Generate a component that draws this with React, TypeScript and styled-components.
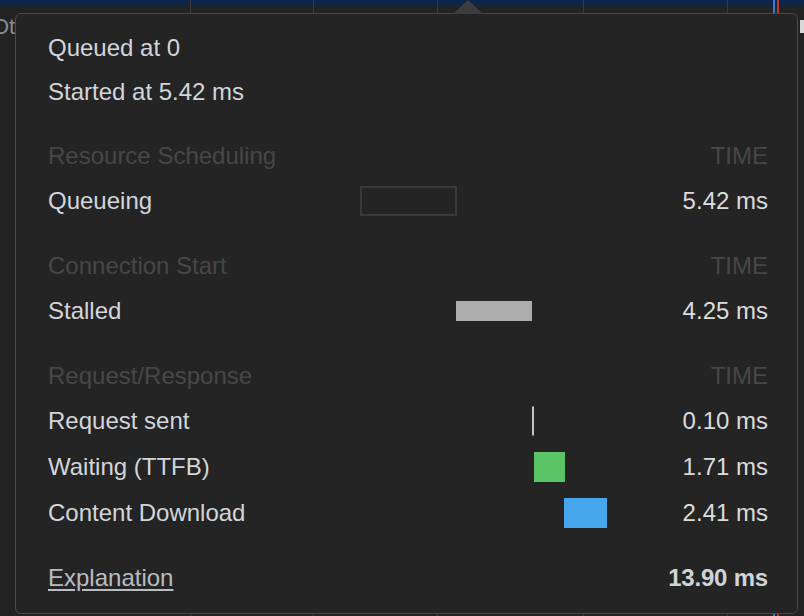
import React from "react";
import styled, { createGlobalStyle } from "styled-components";

const Global = createGlobalStyle`
  html, body { margin: 0; padding: 0; background: #232323; }
  body { width: 804px; height: 616px; overflow: hidden; font-family: "Liberation Sans", Arial, sans-serif; }
`;

const Canvas = styled.div`
  position: relative;
  width: 804px;
  height: 616px;
  overflow: hidden;
  background: #232323;
`;

const TopStrip = styled.div`
  height: 6px;
  background: #0c254c;
`;

const GridLine = styled.div<{ $color?: string; $w?: number }>`
  position: absolute;
  top: 0;
  bottom: 0;
  width: ${(p) => p.$w ?? 1}px;
  background: ${(p) => p.$color ?? "#3a3a3a"};
`;

const ClippedLabel = styled.div`
  position: absolute;
  left: -8px;
  top: 14px;
  font-size: 22px;
  line-height: 26px;
  color: #8c8c8c;
`;

const ScrollThumb = styled.div`
  position: absolute;
  right: 0;
  top: 20px;
  width: 4px;
  height: 13px;
  background: #d9d9d9;
`;

const Popover = styled.div`
  position: absolute;
  left: 15px;
  top: 13px;
  width: 783px;
  height: 601px;
  box-sizing: border-box;
  border: 1px solid #4a4a4a;
  border-radius: 6px;
  background: #242424;
  padding: 12px 29px 0 32px;
  z-index: 2;
`;

const Arrow = styled.div`
  position: absolute;
  top: -14px;
  left: 437px;
  width: 0;
  height: 0;
  border-left: 15px solid transparent;
  border-right: 15px solid transparent;
  border-bottom: 14px solid #3d3d3d;
`;

const InfoLine = styled.div`
  height: 44px;
  line-height: 44px;
  font-size: 24px;
  color: #d2d6db;
`;

const Section = styled.div`
  margin-top: 20px;
`;

const Row = styled.div<{ $h: number }>`
  display: grid;
  grid-template-columns: 312px 248px 1fr;
  align-items: center;
  height: ${(p) => p.$h}px;
  font-size: 24px;
`;

const HeaderText = styled.div<{ $right?: boolean }>`
  color: #474747;
  text-align: ${(p) => (p.$right ? "right" : "left")};
`;

const Label = styled.div`
  color: #d2d6db;
  white-space: nowrap;
`;

const Value = styled.div<{ $bold?: boolean }>`
  color: ${(p) => (p.$bold ? "#d0d4d8" : "#dcdcdc")};
  font-weight: ${(p) => (p.$bold ? 700 : 400)};
  letter-spacing: ${(p) => (p.$bold ? "-0.2px" : "0")};
  text-align: right;
  white-space: nowrap;
`;

const Track = styled.div`
  position: relative;
  height: 100%;
`;

type BarKind = "outline" | "stalled" | "line" | "waiting" | "download";

const Bar = styled.div<{ $kind: BarKind }>`
  position: absolute;
  top: 50%;
  transform: translateY(-50%);
  box-sizing: border-box;
  height: ${(p) => (p.$kind === "stalled" ? 20 : p.$kind === "line" ? 29 : 30)}px;
  background: ${(p) =>
    p.$kind === "outline"
      ? "transparent"
      : p.$kind === "stalled"
      ? "#adadad"
      : p.$kind === "line"
      ? "#bfc3c8"
      : p.$kind === "waiting"
      ? "#5bc466"
      : "#46a7ec"};
  border: ${(p) => (p.$kind === "outline" ? "2px solid #393939" : "none")};
`;

const ExplainLink = styled.a`
  color: #b9bcc0;
  text-decoration: underline;
  text-underline-offset: 3px;
  cursor: pointer;
`;

const TOTAL = 13.9;
const TRACK = 248;

type Timing = { label: string; start: number; dur: number; kind: BarKind; min?: number };
type Group = { title: string; rows: Timing[] };

const groups: Group[] = [
  { title: "Resource Scheduling", rows: [{ label: "Queueing", start: 0, dur: 5.42, kind: "outline" }] },
  { title: "Connection Start", rows: [{ label: "Stalled", start: 5.42, dur: 4.25, kind: "stalled" }] },
  {
    title: "Request/Response",
    rows: [
      { label: "Request sent", start: 9.67, dur: 0.1, kind: "line", min: 2 },
      { label: "Waiting (TTFB)", start: 9.77, dur: 1.71, kind: "waiting" },
      { label: "Content Download", start: 11.48, dur: 2.41, kind: "download" },
    ],
  },
];

const px = (ms: number) => (ms / TOTAL) * TRACK;

export default function App() {
  const gridXs = [190, 313, 437, 583, 727];
  return (
    <>
      <Global />
      <Canvas>
        <TopStrip />
        {gridXs.map((x) => (
          <GridLine key={x} style={{ left: x }} />
        ))}
        <GridLine $color="#3b7bd8" $w={2} style={{ left: 773 }} />
        <GridLine $color="#c0392b" $w={2} style={{ left: 777 }} />
        <ClippedLabel>Other</ClippedLabel>
        <ScrollThumb />
        <Popover>
          <Arrow />
          <InfoLine>Queued at 0</InfoLine>
          <InfoLine>Started at 5.42 ms</InfoLine>
          {groups.map((g) => (
            <Section key={g.title}>
              <Row $h={44}>
                <HeaderText>{g.title}</HeaderText>
                <div />
                <HeaderText $right>TIME</HeaderText>
              </Row>
              {g.rows.map((r) => (
                <Row $h={46} key={r.label}>
                  <Label>{r.label}</Label>
                  <Track>
                    <Bar
                      $kind={r.kind}
                      style={{
                        left: Math.floor(px(r.start)),
                        width: Math.max(r.min ?? 0, Math.round(px(r.dur))),
                      }}
                    />
                  </Track>
                  <Value>{r.dur.toFixed(2)} ms</Value>
                </Row>
              ))}
            </Section>
          ))}
          <Section>
            <Row $h={44}>
              <Label>
                <ExplainLink>Explanation</ExplainLink>
              </Label>
              <div />
              <Value $bold>13.90 ms</Value>
            </Row>
          </Section>
        </Popover>
      </Canvas>
    </>
  );
}
